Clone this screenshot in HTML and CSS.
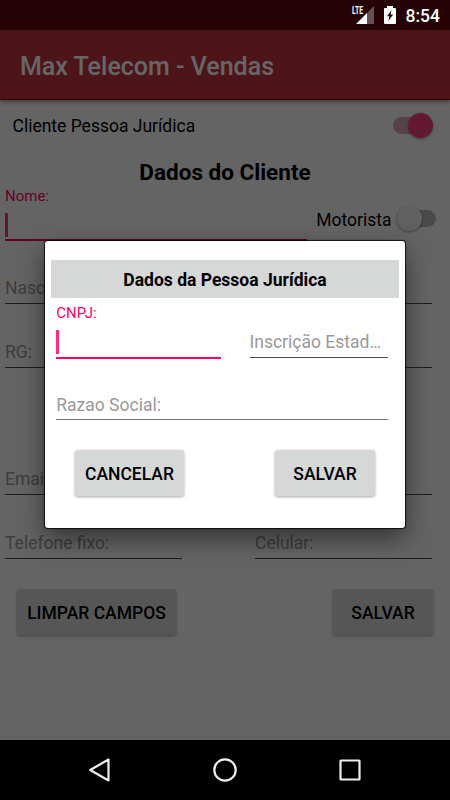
FILE: index.html
```html
<!DOCTYPE html>
<html lang="pt-BR">
<head>
  <meta charset="UTF-8" />
  <meta name="viewport" content="width=device-width, initial-scale=1.0"/>
  <title>Max Telecom - Vendas</title>
  <link rel="stylesheet" href="styles.css">
</head>
<body>
  <div class="screen">
    <div class="status">
      <svg class="signal" width="24" height="24" viewBox="0 -4 24 24">
        <path d="M23 0V18H16V7Z" fill="#655055"/>
        <path d="M16 7V18H5Z" fill="#fff"/>
        <text x="1" y="8" textLength="11" lengthAdjust="spacingAndGlyphs">LTE</text>
      </svg>
      <svg class="battery" width="12" height="18" viewBox="0 0 12 18">
        <path d="M3 0H9V2H11Q12 2 12 3V17Q12 18 11 18H1Q0 18 0 17V3Q0 2 1 2H3Z" fill="#fff"/>
        <path d="M7.5 4L3 10.2H5.4L4.3 15L9.2 8.6H6.6Z" fill="#240206"/>
      </svg>
      <span class="clock">8:54</span>
    </div>

    <div class="toolbar">Max Telecom - Vendas</div>

    <div class="form">
      <div class="switch-row">
        <span>Cliente Pessoa Jurídica</span>
        <span class="switch on"></span>
      </div>
      <h1>Dados do Cliente</h1>
      <div class="name-row">
        <div class="field active">
          <label>Nome:</label>
          <span class="cursor"></span>
        </div>
        <span class="driver">Motorista</span>
        <span class="switch"></span>
      </div>
      <div class="field birth">Nascimento:</div>
      <div class="field rg">RG:</div>
      <div class="field email">Email:</div>
      <div class="phones">
        <div class="field">Telefone fixo:</div>
        <div class="field">Celular:</div>
      </div>
      <div class="buttons">
        <button class="clear">LIMPAR CAMPOS</button>
        <button class="save">SALVAR</button>
      </div>
    </div>

    <div class="navbar">
      <svg width="24" height="24" viewBox="0 0 24 24"><path d="M20.5 1.5V22.5L2.2 12Z"/></svg>
      <svg width="24" height="24" viewBox="0 0 24 24"><circle cx="12" cy="12" r="10.7"/></svg>
      <svg width="24" height="24" viewBox="0 0 24 24"><rect x="2.5" y="2.5" width="19" height="19" rx="0.5"/></svg>
    </div>

    <div class="scrim">
      <div class="dialog">
        <h2>Dados da Pessoa Jurídica</h2>
        <div class="company">
          <div class="field active cnpj">
            <label>CNPJ:</label>
            <span class="cursor"></span>
          </div>
          <div class="field ie">Inscrição Estad…</div>
        </div>
        <div class="field social">Razao Social:</div>
        <div class="dialog-buttons">
          <button class="cancel">CANCELAR</button>
          <button class="save">SALVAR</button>
        </div>
      </div>
    </div>
  </div>
</body>
</html>
```
FILE: styles.css
```css
* {
  box-sizing: border-box;
}
body {
  margin: 0;
  font-family: Roboto, sans-serif;
  font-size: 17.5px;
  color: #000;
}
.screen {
  position: relative;
  width: 450px;
  height: 800px;
  display: flex;
  flex-direction: column;
  background: #fafafa;
  overflow: hidden;
}
.status {
  height: 30px;
  flex: none;
  display: flex;
  align-items: flex-start;
  justify-content: flex-end;
  padding: 6px 10px 0 0;
  color: #fff;
  position: relative;
  z-index: 3;
  background: #240206;
}
.signal {
  margin: -4px 9px 0 0;
}
.signal text {
  font-size: 11px;
  font-weight: 700;
  fill: #fff;
}
.battery {
  margin-right: 10px;
}
.clock {
  font-size: 17.5px;
  font-weight: 500;
  line-height: 20px;
}
.toolbar {
  height: 70px;
  flex: none;
  padding-left: 20px;
  line-height: 73px;
  font-size: 25px;
  font-weight: 500;
  color: #fff;
  background: #c0353f;
  border-bottom: 1px solid #a00008;
  box-shadow: 0 2px 4px rgba(0, 0, 0, .4);
}
.form {
  height: 640px;
  flex: none;
}
.switch-row {
  height: 50px;
  display: flex;
  align-items: center;
  justify-content: space-between;
  padding: 1px 17px 0 12.5px;
  line-height: 24px;
}
.switch {
  position: relative;
  top: -1px;
  width: 40px;
  height: 17px;
  border-radius: 9px;
  background: #b9b9b9;
}
.switch::after {
  content: "";
  position: absolute;
  top: -4px;
  left: 0;
  width: 25px;
  height: 25px;
  border-radius: 50%;
  background: #f1f1f1;
  box-shadow: 0 1px 3px rgba(0, 0, 0, .4);
}
.switch.on {
  top: 0;
  background: #dca6b8;
}
.switch.on::after {
  left: 15px;
  background: #f73f7c;
}
h1 {
  margin: 8px 0 0;
  text-align: center;
  font-size: 22.5px;
  line-height: 28px;
  font-weight: 700;
}
.name-row {
  display: flex;
  padding: 0 14px 0 5px;
  height: 55px;
}
.name-row .field {
  width: 302.5px;
}
.name-row label {
  padding-top: 1px;
  height: 18px;
}
.name-row .switch {
  margin: 25px 0 0 5px;
  width: 39px;
}
.driver {
  margin-left: 9.5px;
  width: 76px;
  padding-top: 22px;
  line-height: 24px;
}
.field {
  border-bottom: 1px solid #4c4c4c;
  color: #999;
  line-height: 22px;
}
.field.active {
  border-bottom: 2px solid #ff0266;
  color: #ff0266;
}
.field label {
  display: block;
  font-size: 15px;
  line-height: 18px;
}
.cursor {
  display: block;
  width: 2.5px;
  height: 24px;
  margin-top: 8px;
  background: #ff2d7f;
}
.name-row .cursor {
  margin-top: 9px;
}
.birth, .rg, .email {
  margin: 36px 18px 0 5px;
  height: 27px;
}
.rg {
  margin-top: 37px;
}
.email {
  margin-top: 100px;
}
.phones {
  display: flex;
  gap: 73px;
  padding: 37px 18px 0 5px;
}
.phones .field {
  flex: 1;
  height: 27px;
}
.buttons, .dialog-buttons {
  display: flex;
  justify-content: space-between;
  padding: 30px 17px 0;
}
button {
  height: 46px;
  padding: 1px 0 0;
  border: 0;
  border-radius: 2.5px;
  background: #d6d8d7;
  color: #000;
  font: 500 17.5px Roboto, sans-serif;
  box-shadow: 0 1px 3px rgba(0, 0, 0, .35);
}
.clear {
  width: 159px;
}
.save {
  width: 100px;
}
.cancel {
  width: 109px;
}
.navbar {
  height: 60px;
  flex: none;
  display: flex;
  justify-content: center;
  align-items: center;
  gap: 101px;
  position: relative;
  z-index: 3;
  background: #000;
}
.navbar svg {
  fill: none;
  stroke: #eee;
  stroke-width: 2.2;
  stroke-linejoin: round;
}
.scrim {
  position: absolute;
  top: 0;
  left: 0;
  width: 450px;
  height: 740px;
  padding: 241px 45px 0;
  background: rgba(0, 0, 0, .6);
  z-index: 2;
}
.dialog {
  height: 287px;
  padding: 19px 6px 0;
  border-radius: 3px;
  background: #fff;
  box-shadow: 0 0 1px 1px rgba(0, 0, 0, .8), 0 10px 26px rgba(0, 0, 0, .5);
}
h2 {
  height: 38px;
  margin: 0;
  text-align: center;
  font-size: 17.5px;
  line-height: 40px;
  font-weight: 700;
  background: #d6d8d7;
}
.company {
  display: flex;
  justify-content: space-between;
  align-items: flex-start;
  padding: 6px 11.5px 0 5.3px;
}
.cnpj {
  width: 165px;
  height: 55px;
}
.ie {
  width: 138px;
  height: 27px;
  margin-top: 27px;
  white-space: nowrap;
}
.social {
  height: 27px;
  margin: 34px 11.5px 0 5.3px;
  line-height: 24px;
  border-color: #777;
}
.dialog-buttons {
  padding: 30px 24px 0;
}
```
